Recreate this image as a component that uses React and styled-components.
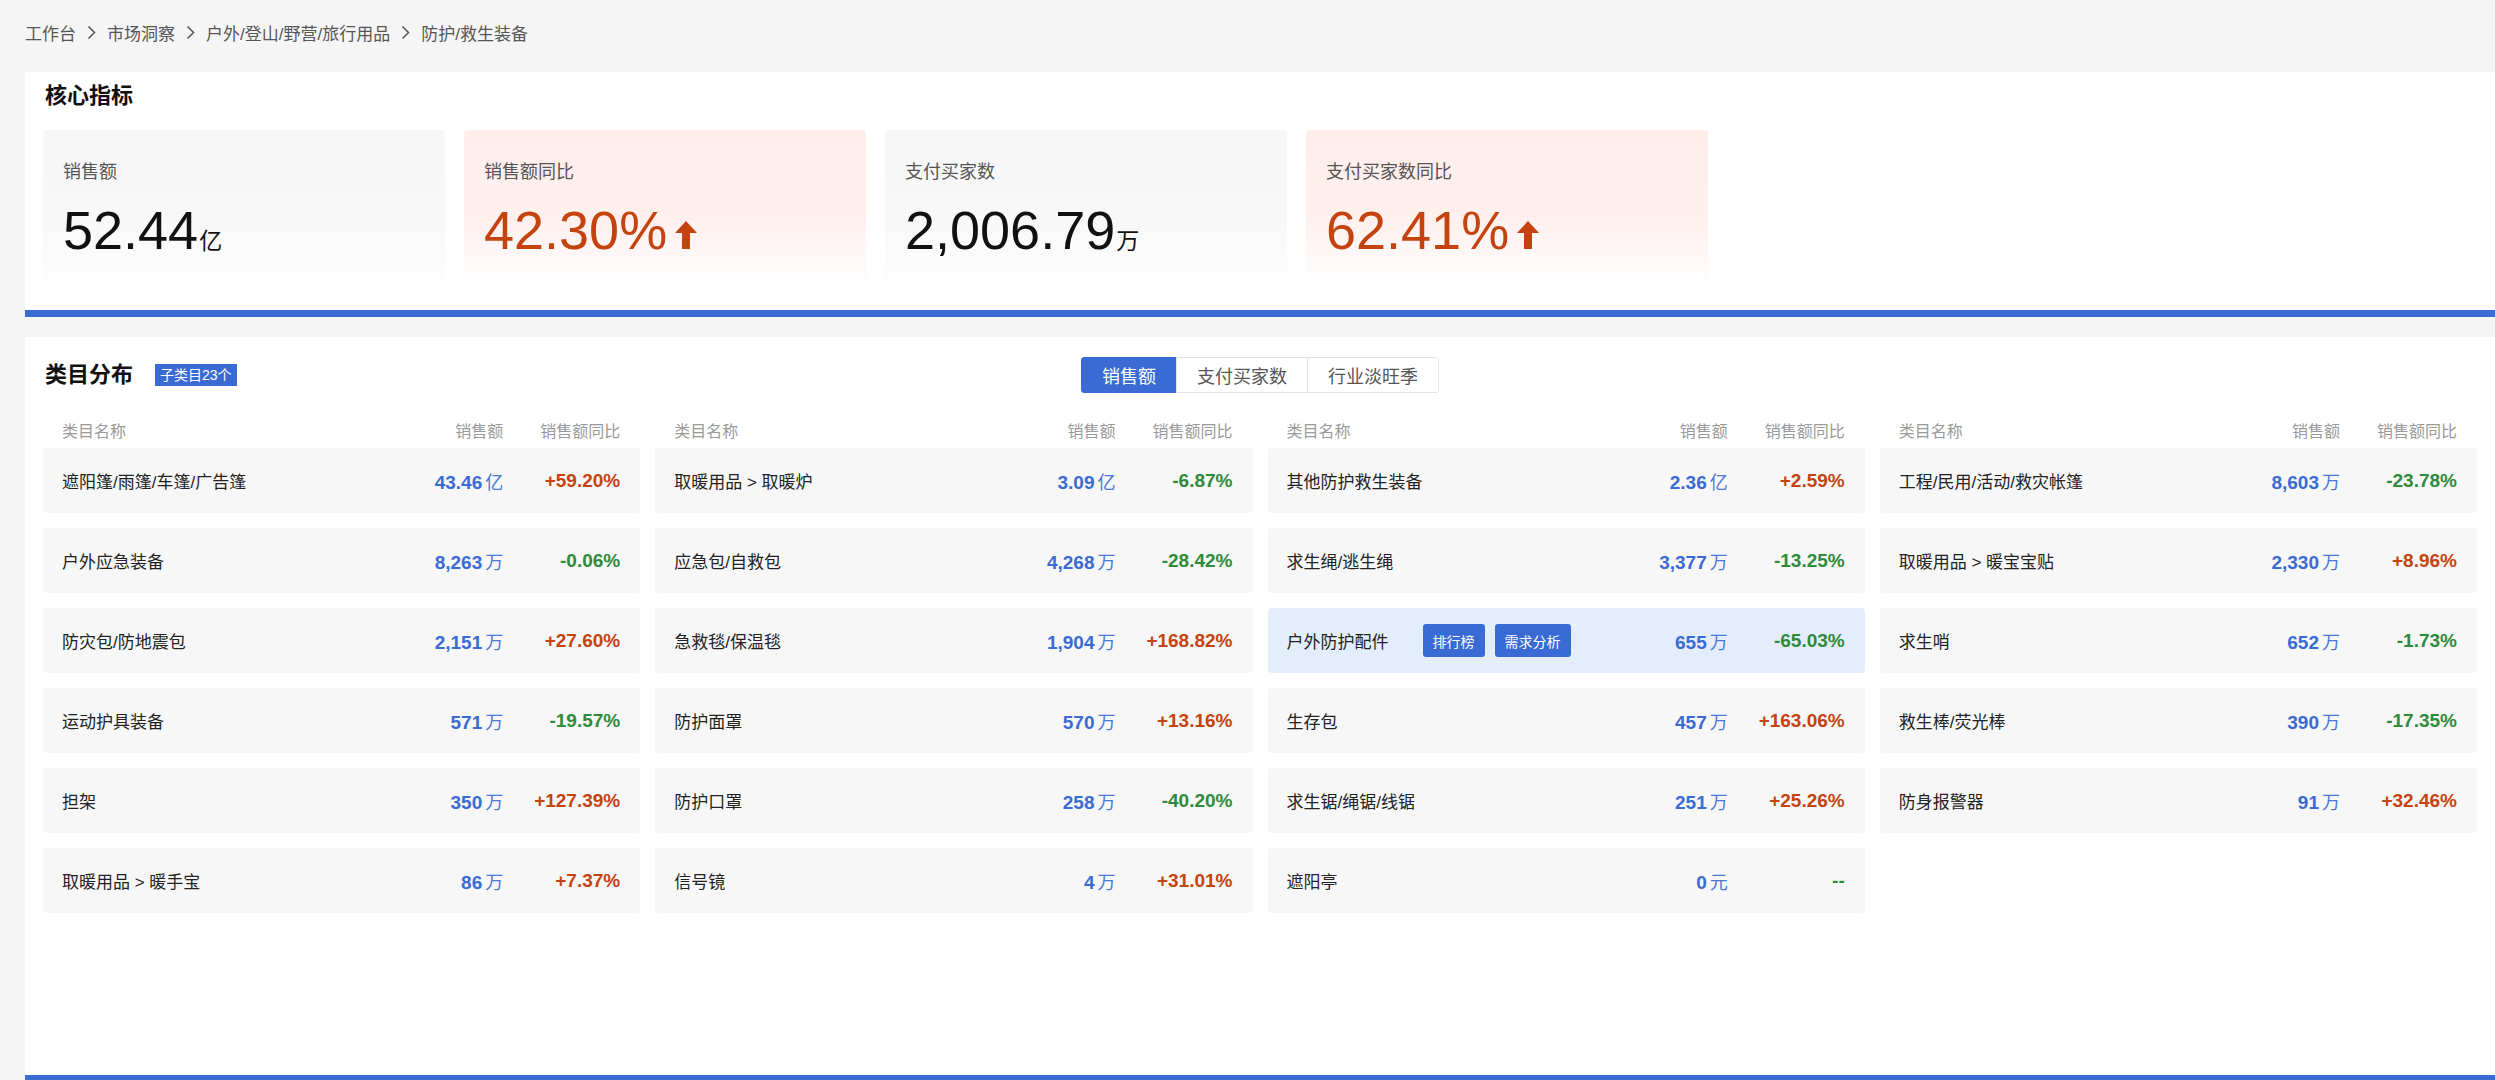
import React from 'react'
import styled, {createGlobalStyle} from 'styled-components'

const GlobalStyle = createGlobalStyle`
  * { box-sizing: border-box; }
  body {
    margin: 0;
    background: #f5f5f5;
    font-family: "Liberation Sans", "Noto Sans CJK SC", sans-serif;
    color: #222;
  }
`

const BLUE = '#3a6bd4'
const RED = '#c4430f'
const GREEN = '#2e8b3b'

const Page = styled.div`
    padding-left: 25px;
    display: flex;
    flex-direction: column;
`

const Crumbs = styled.nav`
    display: flex;
    align-items: center;
    height: 64px;
    margin-bottom: 8px;
    font-size: 17px;
    color: #555;

    .sep {
        display: flex;
        margin: 0 11px;
    }
`

const Panel = styled.section`
    background: #fff;
    padding: ${p => p.$pad};
    border-bottom: 7px solid ${BLUE};
    min-height: ${p => p.$minHeight || 'auto'};
    margin-bottom: 20px;
`

const Title = styled.h2`
    margin: 0;
    font-size: 22px;
    line-height: 24px;
    font-weight: 700;
    color: #111;
    padding-left: 2px;
`

const MetricRow = styled.div`
    display: grid;
    grid-template-columns: repeat(4, 402px);
    column-gap: 19px;
    margin-top: 22px;
`

const MetricCard = styled.div`
    height: 160px;
    padding: 30px 20px;
    border-radius: 4px;
    background: ${p => p.$hot
        ? 'linear-gradient(180deg, #ffedeb 0%, #fff0ee 55%, #fffafa 85%, #fff 100%)'
        : 'linear-gradient(180deg, #f7f7f7 0%, #f8f8f8 55%, #fcfcfc 85%, #fff 100%)'};

    .label {
        font-size: 18px;
        line-height: 24px;
        color: #555;
    }
`

const BigValue = styled.div`
    display: flex;
    align-items: baseline;
    margin-top: 16px;
    font-size: 54px;
    line-height: 60px;
    color: ${p => p.$hot ? RED : '#111'};

    .unit {
        font-size: 23px;
        margin-left: 1px;
    }

    svg {
        margin-left: 8px;
    }
`

const Arrow = () => (
    <svg width="22" height="28" viewBox="0 0 22 28">
        <polygon points="11,0 22,12 15,12 15,28 7,28 7,12 0,12" fill={RED} />
    </svg>
)

const Chevron = () => (
    <svg width="9" height="15" viewBox="0 0 9 15">
        <path d="M1.5 1.5 7.5 7.5l-6 6" fill="none" stroke="#555" strokeWidth="1.5" />
    </svg>
)

const TitleBar = styled.div`
    display: grid;
    grid-template-columns: 1fr auto 1fr;
    align-items: center;
    height: 36px;
`

const TitleGroup = styled.div`
    display: flex;
    align-items: center;
    gap: 22px;
`

const Badge = styled.span`
    background: ${BLUE};
    color: #fff;
    font-size: 14px;
    line-height: 22px;
    padding: 0 5px;
`

const Tabs = styled.div`
    display: flex;
    height: 36px;
`

const Tab = styled.button`
    font: inherit;
    font-size: 18px;
    padding: 0 20px;
    height: 36px;
    border: 1px solid ${p => p.$active ? BLUE : '#dfe2e8'};
    margin-left: -1px;
    background: ${p => p.$active ? BLUE : '#fff'};
    color: ${p => p.$active ? '#fff' : '#555'};
    cursor: pointer;

    &:first-child {
        border-radius: 3px 0 0 3px;
        margin-left: 0;
    }

    &:last-child {
        border-radius: 0 3px 3px 0;
    }
`

const Grid = styled.div`
    display: grid;
    grid-template-columns: repeat(4, 1fr);
    column-gap: 15px;
    row-gap: 15px;
`

const HeadGrid = styled(Grid)`
    margin-top: 19px;
`

const HeadCell = styled.div`
    height: 36px;
    display: flex;
    align-items: center;
    padding: 0 20px 0 19px;
    font-size: 16px;
    color: #999;

    .name { flex: 1; }
    .change { width: 117px; text-align: right; }
`

const Row = styled.div`
    height: 65px;
    display: flex;
    align-items: center;
    padding: 0 20px 0 19px;
    border-radius: 4px;
    background: ${p => p.$active ? '#e3edfc' : '#f7f7f7'};
`

const Name = styled.div`
    flex: 1;
    display: flex;
    align-items: center;
    font-size: 17px;
    color: #222;
`

const Actions = styled.div`
    display: flex;
    gap: 10px;
    margin-left: 34px;
`

const SmallButton = styled.button`
    font: inherit;
    font-size: 14px;
    height: 33px;
    padding: 0 10px;
    border: none;
    border-radius: 3px;
    background: ${BLUE};
    color: #fff;
`

const Amount = styled.div`
    font-size: 19px;
    font-weight: 700;
    color: ${BLUE};
    white-space: nowrap;

    span {
        font-size: 18px;
        font-weight: 400;
        margin-left: 3px;
        color: #4a78d8;
    }
`

const Change = styled.div`
    width: 117px;
    text-align: right;
    font-size: 19px;
    font-weight: 700;
    color: ${p => p.$up ? RED : GREEN};
`

const crumbs = ['工作台', '市场洞察', '户外/登山/野营/旅行用品', '防护/救生装备']

const metrics = [
    {label: '销售额', value: '52.44', unit: '亿'},
    {label: '销售额同比', value: '42.30%', hot: true},
    {label: '支付买家数', value: '2,006.79', unit: '万'},
    {label: '支付买家数同比', value: '62.41%', hot: true},
]

const rows = [
    ['遮阳篷/雨篷/车篷/广告篷', '43.46', '亿', '+59.20%'],
    ['取暖用品 > 取暖炉', '3.09', '亿', '-6.87%'],
    ['其他防护救生装备', '2.36', '亿', '+2.59%'],
    ['工程/民用/活动/救灾帐篷', '8,603', '万', '-23.78%'],
    ['户外应急装备', '8,263', '万', '-0.06%'],
    ['应急包/自救包', '4,268', '万', '-28.42%'],
    ['求生绳/逃生绳', '3,377', '万', '-13.25%'],
    ['取暖用品 > 暖宝宝贴', '2,330', '万', '+8.96%'],
    ['防灾包/防地震包', '2,151', '万', '+27.60%'],
    ['急救毯/保温毯', '1,904', '万', '+168.82%'],
    ['户外防护配件', '655', '万', '-65.03%', true],
    ['求生哨', '652', '万', '-1.73%'],
    ['运动护具装备', '571', '万', '-19.57%'],
    ['防护面罩', '570', '万', '+13.16%'],
    ['生存包', '457', '万', '+163.06%'],
    ['救生棒/荧光棒', '390', '万', '-17.35%'],
    ['担架', '350', '万', '+127.39%'],
    ['防护口罩', '258', '万', '-40.20%'],
    ['求生锯/绳锯/线锯', '251', '万', '+25.26%'],
    ['防身报警器', '91', '万', '+32.46%'],
    ['取暖用品 > 暖手宝', '86', '万', '+7.37%'],
    ['信号镜', '4', '万', '+31.01%'],
    ['遮阳亭', '0', '元', '--'],
]

const App = () => {
    return (
        <>
            <GlobalStyle />
            <Page>
                <Crumbs>
                    {crumbs.map((c, i) => (
                        <React.Fragment key={c}>
                            {i > 0 && <span className='sep'><Chevron /></span>}
                            <span>{c}</span>
                        </React.Fragment>
                    ))}
                </Crumbs>

                <Panel $pad='12px 18px 20px'>
                    <Title>核心指标</Title>
                    <MetricRow>
                        {metrics.map(m => (
                            <MetricCard key={m.label} $hot={m.hot}>
                                <div className='label'>{m.label}</div>
                                <BigValue $hot={m.hot}>
                                    {m.value}
                                    {m.unit && <span className='unit'>{m.unit}</span>}
                                    {m.hot && <Arrow />}
                                </BigValue>
                            </MetricCard>
                        ))}
                    </MetricRow>
                </Panel>

                <Panel $pad='20px 18px' $minHeight='745px'>
                    <TitleBar>
                        <TitleGroup>
                            <Title>类目分布</Title>
                            <Badge>子类目23个</Badge>
                        </TitleGroup>
                        <Tabs>
                            <Tab $active>销售额</Tab>
                            <Tab>支付买家数</Tab>
                            <Tab>行业淡旺季</Tab>
                        </Tabs>
                        <div />
                    </TitleBar>

                    <HeadGrid>
                        {[0, 1, 2, 3].map(i => (
                            <HeadCell key={i}>
                                <span className='name'>类目名称</span>
                                <span>销售额</span>
                                <span className='change'>销售额同比</span>
                            </HeadCell>
                        ))}
                    </HeadGrid>

                    <Grid>
                        {rows.map(([name, amount, unit, change, active]) => (
                            <Row key={name} $active={active}>
                                <Name>
                                    {name}
                                    {active && (
                                        <Actions>
                                            <SmallButton>排行榜</SmallButton>
                                            <SmallButton>需求分析</SmallButton>
                                        </Actions>
                                    )}
                                </Name>
                                <Amount>{amount}<span>{unit}</span></Amount>
                                <Change $up={change.startsWith('+')}>{change}</Change>
                            </Row>
                        ))}
                    </Grid>
                </Panel>
            </Page>
        </>
    )
}

export default App
